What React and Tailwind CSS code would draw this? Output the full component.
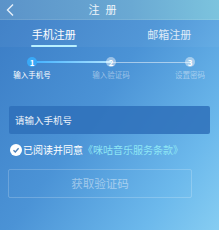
export default function App() {
  const font = { fontFamily: '"Noto Sans CJK SC", "Noto Sans", sans-serif' }
  return (
    <div
      className="relative h-[230px] w-[219px] overflow-hidden bg-[linear-gradient(125deg,#3a7bc4_0%,#4b93d6_45%,#6cb9ec_80%,#86cdf2_100%)] text-white"
      style={font}
    >
      {/* header */}
      <div className="flex h-[20px] items-center border-b border-white/10 bg-[linear-gradient(90deg,#5b93c9,#6aa9d3_60%,#7cc4de)] px-[4px]">
        <svg width="12" height="14" viewBox="0 0 12 14" className="shrink-0">
          <path d="M9 1.5 L3.5 7 L9 12.5" fill="none" stroke="#e6f0fa" strokeWidth="1.4" />
        </svg>
        <div className="flex-1 pr-[20px] text-center text-[11px] leading-none tracking-[6px] text-white/90">注册</div>
      </div>

      {/* tabs */}
      <div className="flex h-[27px] items-end bg-[#ffffff0a]">
        <div className="flex flex-1 flex-col items-center pr-[4px]">
          <span className="text-[11px] leading-[14px] text-white">手机注册</span>
          <div className="mt-[4px] h-[2px] w-[46px] rounded-full bg-[#b8f0ff]" />
        </div>
        <div className="flex flex-1 flex-col items-center">
          <span className="pl-[8px] text-[11px] leading-[14px] text-white/80">邮箱注册</span>
          <div className="mt-[4px] h-[2px]" />
        </div>
      </div>

      {/* steps */}
      <div className="relative mt-[10px] h-[30px] px-[10px]">
        <div className="absolute left-[31px] right-[30px] top-[5px] h-[1px] bg-white/50" />
        <div className="absolute left-[31px] top-[4px] h-[2px] w-[80px] bg-[linear-gradient(90deg,#3fb0ff,#aee4ff)]" />
        <div className="relative flex justify-between text-[7.5px] leading-[9px]">
          <div className="flex w-[44px] flex-col items-center">
            <div className="flex h-[10px] w-[10px] items-center justify-center rounded-full bg-[#39a9f7] text-[8px] font-bold">1</div>
            <span className="mt-[3px] text-white">输入手机号</span>
          </div>
          <div className="flex w-[44px] flex-col items-center">
            <div className="flex h-[10px] w-[10px] items-center justify-center rounded-full bg-white/45 text-[8px] font-bold">2</div>
            <span className="mt-[3px] text-white/45">输入验证码</span>
          </div>
          <div className="-mr-[3px] flex w-[44px] flex-col items-center">
            <div className="flex h-[10px] w-[10px] items-center justify-center rounded-full bg-white/45 text-[8px] font-bold">3</div>
            <span className="mt-[3px] text-white/45">设置密码</span>
          </div>
        </div>
      </div>

      {/* input */}
      <div className="mx-[9px] mt-[19px] flex h-[28px] items-center rounded-[2px] bg-[#2e70ba]/85 px-[6px] text-[9.5px] text-white/90">
        请输入手机号
      </div>

      {/* agreement */}
      <div className="ml-[10px] mt-[10px] flex h-[12px] items-center text-[10px] leading-none">
        <div className="mr-[1px] flex h-[12px] w-[12px] items-center justify-center rounded-full bg-white">
          <svg width="8" height="8" viewBox="0 0 8 8">
            <path d="M1.5 4.2 L3.3 6 L6.6 2.2" fill="none" stroke="#4a7fb8" strokeWidth="1.3" />
          </svg>
        </div>
        <span className="text-white">已阅读并同意</span>
        <span className="text-[#8ee6f5]">《咪咕音乐服务条款》</span>
      </div>

      {/* button */}
      <div className="ml-[8px] mr-[27px] mt-[13px] flex h-[29px] items-center justify-center rounded-[2px] border border-white/20 text-[11.5px] text-white/45">
        获取验证码
      </div>
    </div>
  )
}
